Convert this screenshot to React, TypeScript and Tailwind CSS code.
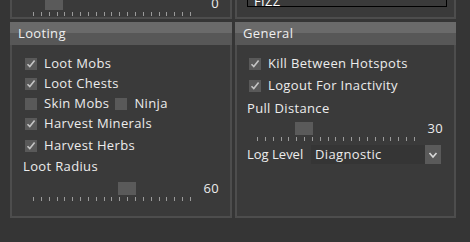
import React from "react";

const TICKS = Array.from({ length: 21 }, (_, i) => i);

function Check({ checked }: { checked: boolean }) {
  return (
    <span className="flex h-[12px] w-[12px] shrink-0 items-center justify-center bg-[#595959]">
      {checked && (
        <svg width="10" height="10" viewBox="0 0 10 10" fill="none">
          <path d="M1.5 5.2 L3.8 7.6 L8.6 1.6" stroke="#c4c4c4" strokeWidth="1.6" />
        </svg>
      )}
    </span>
  );
}

function CheckRow({ label, checked }: { label: string; checked: boolean }) {
  return (
    <label className="flex h-[20px] items-center gap-[7px]">
      <Check checked={checked} />
      <span className="whitespace-nowrap">{label}</span>
    </label>
  );
}

function Slider({ thumb, value, ml }: { thumb: number; value: string; ml: string }) {
  return (
    <div className={`flex items-start pr-[11px] ${ml}`}>
      <div className="relative h-[19px] w-[158px]">
        {/* thumb sits over the tick track */}
        <div className="absolute top-0 h-[13px] w-[18px] bg-[#5a5a5a]" style={{ left: thumb }} />
        <div className="absolute bottom-0 left-0 right-0 flex h-[4px] justify-between">
          {TICKS.map((t) => (
            <span key={t} className="h-[4px] w-px bg-[#9a9a9a]" />
          ))}
        </div>
      </div>
      <span className="ml-auto leading-[13px]">{value}</span>
    </div>
  );
}

function Header({ title }: { title: string }) {
  return (
    <div className="flex h-[23px] items-center pl-[8px] bg-[linear-gradient(to_bottom,#6a6a6a_48%,#575757_48%)] text-[#efefef]">
      {title}
    </div>
  );
}

export default function App() {
  return (
    <div
      className="h-[242px] w-[470px] overflow-hidden bg-[#353535] text-[13px] tracking-[0.35px] text-[#ececec]"
      style={{ fontFamily: '"Open Sans", "Noto Sans", sans-serif' }}
    >
      {/* bottom edge of the panels above */}
      <div className="flex h-[19px] gap-[3px] pl-[10px]">
        <div className="flex w-[222px] flex-col justify-end overflow-hidden border-x-2 border-b-2 border-[#4d4d4d] bg-[#3a3a3a] pb-[1px]">
          <Slider thumb={12} value="0" ml="ml-[21px]" />
        </div>
        <div className="flex w-[221px] flex-col justify-end overflow-hidden border-x-2 border-b-2 border-[#4d4d4d] bg-[#3a3a3a] pb-[10px]">
          <div className="ml-[10px] mr-[7px] flex h-[20px] items-end border border-black px-[6px] leading-[9px] text-white">
            FIZZ
          </div>
        </div>
      </div>

      <div className="mt-[3px] flex gap-[3px] pl-[10px]">
        <section className="flex w-[222px] flex-col">
          <Header title="Looting" />
          <div className="flex h-[173px] flex-col border-x-2 border-b-2 border-[#4d4d4d] bg-[#3a3a3a] pt-[9px]">
            <div className="flex flex-col pl-[13px]">
              <CheckRow label="Loot Mobs" checked />
              <CheckRow label="Loot Chests" checked />
              <div className="flex h-[20px] items-center">
                <Check checked={false} />
                <span className="ml-[7px] whitespace-nowrap">Skin Mobs</span>
                <span className="ml-[6px]">
                  <Check checked={false} />
                </span>
                <span className="ml-[7px]">Ninja</span>
              </div>
              <CheckRow label="Harvest Minerals" checked />
              <div className="mt-[2px]">
                <CheckRow label="Harvest Herbs" checked />
              </div>
            </div>
            <div className="flex h-[21px] items-center pl-[11px]">Loot Radius</div>
            <div className="mt-[5px]">
              <Slider thumb={85} value="60" ml="ml-[21px]" />
            </div>
          </div>
        </section>

        <section className="flex w-[221px] flex-col">
          <Header title="General" />
          <div className="flex h-[173px] flex-col border-x-2 border-b-2 border-[#4d4d4d] bg-[#3a3a3a] pt-[9px]">
            <div className="flex flex-col pl-[12px]">
              <CheckRow label="Kill Between Hotspots" checked />
              <div className="mt-[2px]">
                <CheckRow label="Logout For Inactivity" checked />
              </div>
            </div>
            <div className="mt-[2px] flex h-[21px] items-center pl-[10px]">Pull Distance</div>
            <div className="mt-[3px]">
              <Slider thumb={38} value="30" ml="ml-[20px]" />
            </div>
            <div className="mt-[4px] flex items-center pl-[10px]">
              <span className="w-[64px] shrink-0 whitespace-nowrap tracking-normal">Log Level</span>
              <div className="flex h-[19px] w-[130px] items-center bg-[#353535] pl-[4px]">
                <span className="flex-1">Diagnostic</span>
                <span className="flex h-[19px] w-[16px] items-center justify-center bg-[#5a5a5a]">
                  <svg width="10" height="8" viewBox="0 0 10 8" fill="none">
                    <path d="M1.5 2 L5 6 L8.5 2" stroke="#d8d8d8" strokeWidth="1.6" />
                  </svg>
                </span>
              </div>
            </div>
          </div>
        </section>
      </div>
    </div>
  );
}
